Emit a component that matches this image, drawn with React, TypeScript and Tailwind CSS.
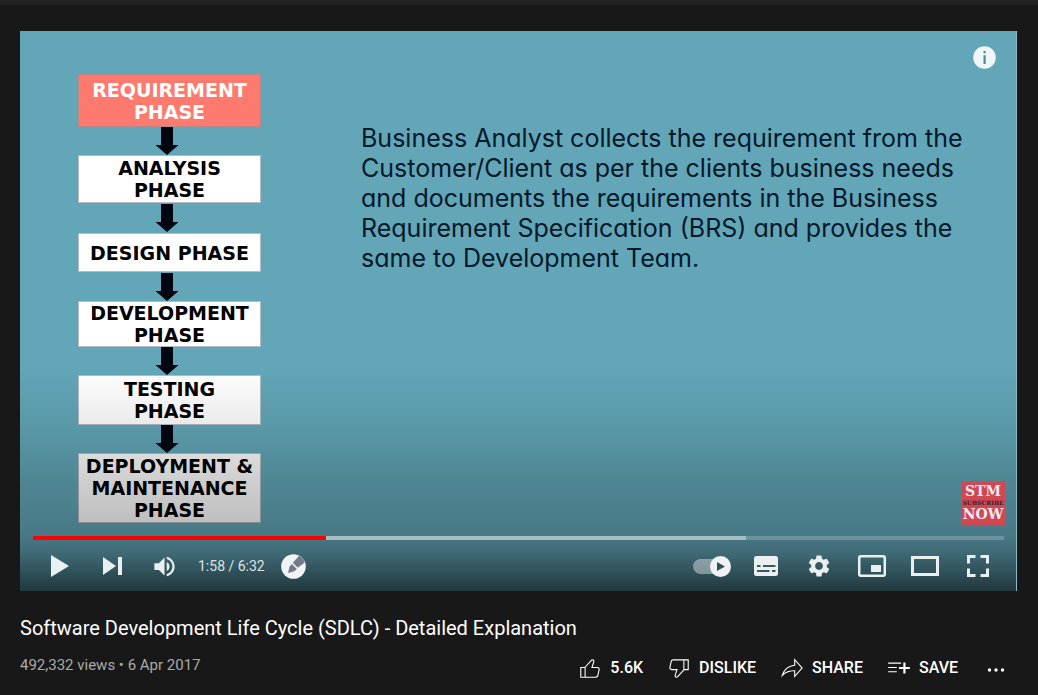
import { Fragment, type ReactNode } from 'react';
import { MdSettings, MdVolumeUp } from 'react-icons/md';

const phases = [
  { lines: ['REQUIREMENT', 'PHASE'], box: 'h-[53px] bg-[#ff7a6e] text-white', arrow: 'h-[28px]' },
  { lines: ['ANALYSIS', 'PHASE'], box: 'h-[48px] bg-white text-black', arrow: 'h-[30px]' },
  { lines: ['DESIGN PHASE'], box: 'h-[39px] bg-white text-black', arrow: 'h-[29px]' },
  { lines: ['DEVELOPMENT', 'PHASE'], box: 'h-[46px] bg-white text-black', arrow: 'h-[28px]' },
  { lines: ['TESTING', 'PHASE'], box: 'h-[50px] bg-white text-black', arrow: 'h-[28px]' },
  { lines: ['DEPLOYMENT &', 'MAINTENANCE', 'PHASE'], box: 'h-[70px] bg-white text-black', arrow: '' },
];

const description = [
  'Business Analyst collects the requirement from the',
  'Customer/Client as per the clients business needs',
  'and documents the requirements in the Business',
  'Requirement Specification (BRS) and provides the',
  'same to Development Team.',
];

const likePath =
  'M18.77,11h-4.23l1.52-4.94C16.38,5.03,15.54,4,14.38,4c-0.58,0-1.14,0.24-1.52,0.65L7,11H3v10h4h1h9.43c1.06,0,1.98-0.67,2.19-1.61l1.34-6C21.23,12.15,20.18,11,18.77,11z M7,20H4v-8h3V20z M19.98,13.17l-1.34,6C18.54,19.65,18.03,20,17.43,20H8v-8.61l5.6-6.06C13.79,5.12,14.08,5,14.38,5c0.26,0,0.5,0.11,0.63,0.3c0.07,0.1,0.15,0.26,0.09,0.47l-1.52,4.94L13.18,12h1.35h4.23c0.41,0,0.8,0.17,1.03,0.46C19.92,12.61,20.05,12.86,19.98,13.17z';
const dislikePath =
  'M17,4h-1H6.57C5.5,4,4.59,4.67,4.38,5.61l-1.34,6C2.77,12.85,3.82,14,5.23,14h4.23l-1.52,4.94C7.62,19.97,8.46,21,9.62,21c0.58,0,1.14-0.24,1.52-0.65L17,14h4V4H17z M10.4,19.67C10.21,19.88,9.92,20,9.62,20c-0.26,0-0.5-0.11-0.63-0.3c-0.07-0.1-0.15-0.26-0.09-0.47l1.52-4.94l0.4-1.29H9.46H5.23c-0.41,0-0.8-0.17-1.03-0.46c-0.12-0.15-0.25-0.4-0.18-0.72l1.34-6C5.46,5.35,5.97,5,6.57,5H16v8.61L10.4,19.67z M20,13h-3V5h3V13z';
const sharePath =
  'M15,5.63L20.66,12L15,18.37V15v-1h-1c-3.96,0-7.14,1-9.75,3.09c1.84-4.07,5.11-6.4,9.89-7.1L15,9.86V9V5.63 M14,3v6C6.22,10.13,3.11,15.33,2,21c2.78-3.97,6.44-6,12-6v6l8-9L14,3L14,3z';
const savePath = 'M22,13h-4v4h-2v-4h-4v-2h4V7h2v4h4V13z M14,7H2v1h12V7z M2,12h8v-1H2V12z M2,16h8v-1H2V16z';

const actions = [
  { text: '5.6K', path: likePath },
  { text: 'DISLIKE', path: dislikePath },
  { text: 'SHARE', path: sharePath },
  { text: 'SAVE', path: savePath },
];

function ControlButton({ label, wide, children }: { label: string; wide?: boolean; children: ReactNode }) {
  return (
    <button
      type="button"
      aria-label={label}
      className={`flex h-11 shrink-0 items-center justify-center text-[#eaeff0] ${wide ? 'w-[53px]' : 'w-[52px]'}`}
    >
      {children}
    </button>
  );
}

function Arrow({ height }: { height: string }) {
  return (
    <div className={`flex items-center justify-center pr-1.5 ${height}`}>
      <svg width="24" height="28" viewBox="0 0 24 28" fill="#020610" aria-hidden="true">
        <path d="M6 0H18V18H23.5L12 28L.5 18H6Z" />
      </svg>
    </div>
  );
}

function Slide() {
  return (
    <div className="flex items-start pl-[58px] pr-8 pt-[43px]">
      <div className="w-[183px] shrink-0">
        {phases.map((phase) => (
          <Fragment key={phase.lines[0]}>
            <div
              className={`flex flex-col items-center justify-center border border-[#8190a0]/60 font-['DejaVu_Sans',sans-serif] text-[19px] font-bold leading-[22px] ${phase.box}`}
            >
              {phase.lines.map((line) => (
                <span key={line} className="whitespace-nowrap">
                  {line}
                </span>
              ))}
            </div>
            {phase.arrow && <Arrow height={phase.arrow} />}
          </Fragment>
        ))}
      </div>
      <p className="ml-[100px] mt-[49px] font-[Inter,sans-serif] text-[25px] font-normal leading-[30px] text-[#03182a] [font-feature-settings:'cv11']">
        {description.map((line) => (
          <span key={line} className="block whitespace-nowrap">
            {line}
          </span>
        ))}
      </p>
    </div>
  );
}

function Controls() {
  return (
    <div className="relative pl-[13px] pr-3 pt-[13px]">
      <input
        type="range"
        aria-label="Seek"
        min={0}
        max={392}
        defaultValue={118}
        className="block h-1 w-full appearance-none bg-[linear-gradient(to_right,#f00_30.2%,#a6bdc3_30.2%,#a6bdc3_73.4%,#6b939e_73.4%)] [&::-webkit-slider-thumb]:size-0 [&::-webkit-slider-thumb]:appearance-none"
      />
      <div className="flex items-center pb-[3px] pl-px pt-1">
        <ControlButton label="Play">
          <svg width="18" height="22" viewBox="0 0 18 22" fill="currentColor">
            <path d="M0 0L18 11L0 22Z" />
          </svg>
        </ControlButton>
        <ControlButton label="Next">
          <svg width="19" height="18" viewBox="0 0 19 18" fill="currentColor">
            <path d="M0 0L13 9L0 18ZM15 0H19V18H15Z" />
          </svg>
        </ControlButton>
        <ControlButton label="Mute">
          <MdVolumeUp size={27} />
        </ControlButton>
        <span className="ml-2 whitespace-nowrap text-sm text-[#dde3e5]">1:58 / 6:32</span>
        <button type="button" aria-label="Highlight this moment" className="ml-4 shrink-0">
          <svg width="25" height="25" viewBox="0 0 25 25">
            <circle cx="12.500" cy="12.500" r="12.300" fill="#f1f3f4" />
            <path d="M11.800 8.800L18.200 1.700Q22.500 4 23.700 8.400L16.800 13.800Z" fill="#747b88" />
            <path d="M10.900 10L15.900 14.900L13.400 17.300L7 19L8.600 12.400Z" fill="#747b88" />
          </svg>
        </button>
        <div className="ml-auto flex items-center">
          <button type="button" role="switch" aria-checked="true" aria-label="Autoplay" className="mr-2 shrink-0">
            <svg width="39" height="22" viewBox="0 0 39 22">
              <rect x="1" y="4" width="32" height="15" rx="7.500" fill="#fff" fillOpacity=".4" />
              <circle cx="28.500" cy="11.500" r="10.500" fill="#eef2f3" />
              <path d="M25 7L33 11.500L25 16Z" fill="#344d55" />
            </svg>
          </button>
          <ControlButton label="Subtitles" wide>
            <svg width="24" height="20" viewBox="0 0 24 20">
              <rect width="24" height="20" rx="2.500" fill="currentColor" />
              <path d="M3 9H6.500V11H3ZM9 9H21.500V11H9ZM3 14H15.500V16H3ZM18 14H21.500V16H18Z" fill="#3a5962" />
            </svg>
          </ControlButton>
          <ControlButton label="Settings" wide>
            <MdSettings size={26} />
          </ControlButton>
          <ControlButton label="Miniplayer" wide>
            <svg width="28" height="22" viewBox="0 0 28 22">
              <rect x="1.250" y="1.250" width="25.500" height="19.500" rx="1.500" fill="none" stroke="currentColor" strokeWidth="2.500" />
              <path d="M13 10H23V17H13Z" fill="currentColor" />
            </svg>
          </ControlButton>
          <ControlButton label="Theatre mode" wide>
            <svg width="28" height="20" viewBox="0 0 28 20">
              <rect x="1.500" y="1.500" width="25" height="17" fill="none" stroke="currentColor" strokeWidth="3" />
            </svg>
          </ControlButton>
          <ControlButton label="Full screen" wide>
            <svg width="22" height="22" viewBox="0 0 22 22" fill="none" stroke="currentColor" strokeWidth="3">
              <path d="M1.500 8.500V1.500H8.500M13.500 1.500H20.500V8.500M20.500 13.500V20.500H13.500M8.500 20.500H1.500V13.500" />
            </svg>
          </ControlButton>
        </div>
      </div>
    </div>
  );
}

export default function App() {
  return (
    <main className="min-h-screen bg-[#181818] font-[Roboto,sans-serif]">
      <div className="h-[5px] bg-[#212121]" />
      <section aria-label="Video player" className="relative ml-5 mr-[21px] mt-[26px] border-r border-[#8fb9c5] bg-[#62a6b7]">
        <Slide />
        <div className="absolute inset-x-0 bottom-0 h-56 bg-[linear-gradient(to_bottom,transparent,rgba(0,0,0,.08)_25%,rgba(0,0,0,.19)_50%,rgba(0,0,0,.27)_75%,rgba(0,0,0,.36)_83%,rgba(0,0,0,.52)_92%,rgba(0,0,0,.66))]" />
        <button type="button" aria-label="More information" className="absolute right-5 top-[15px]">
          <svg width="23" height="23" viewBox="0 0 23 23">
            <circle cx="11.500" cy="11.500" r="11.300" fill="#eef6f8" />
            <path d="M10.500 5H12.700V7.300H10.500ZM10.500 9.200H12.700V18H10.500Z" fill="#4f8795" />
          </svg>
        </button>
        <a
          href="#subscribe"
          className="absolute bottom-[66px] right-[11px] flex size-11 flex-col items-center justify-center bg-[#d04853] font-['DejaVu_Serif',serif] font-bold text-[#eceaf0]"
        >
          <span className="text-[14px] leading-[14px]">STM</span>
          <span className="text-[6px] leading-[9px] text-[#30202a]">SUBSCRIBE</span>
          <span className="text-[14px] leading-[15px]">NOW</span>
        </a>
        <Controls />
      </section>
      <section className="pl-5 pr-[29px] pt-[23px]">
        <h1 className="text-xl leading-7 text-white">Software Development Life Cycle (SDLC) - Detailed Explanation</h1>
        <div className="flex items-center justify-between pt-[13px]">
          <p className="whitespace-nowrap pb-1.5 text-[15px] leading-5 text-[#aaa]">492,332 views • 6 Apr 2017</p>
          <div className="flex items-center gap-[23px]">
            {actions.map((action) => (
              <button key={action.text} type="button" className="flex items-center gap-[7px] whitespace-nowrap text-[16px] font-medium text-white">
                <svg width="26" height="26" viewBox="0 0 24 24" fill="currentColor" aria-hidden="true">
                  <path d={action.path} />
                </svg>
                {action.text}
              </button>
            ))}
            <button type="button" aria-label="More actions" className="ml-0.5 text-white">
              <svg width="26" height="26" viewBox="0 0 26 26" fill="currentColor">
                <circle cx="6.500" cy="15" r="1.700" />
                <circle cx="13" cy="15" r="1.700" />
                <circle cx="19.500" cy="15" r="1.700" />
              </svg>
            </button>
          </div>
        </div>
      </section>
    </main>
  );
}
